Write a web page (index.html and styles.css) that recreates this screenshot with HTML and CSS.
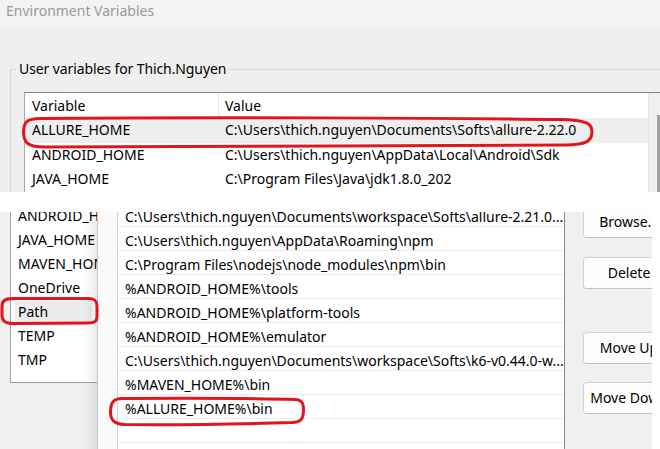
FILE: index.html
```html
<!DOCTYPE html>
<html>
<head>
<meta charset="utf-8">
<link rel="stylesheet" href="styles.css">
</head>
<body>
<div class="page">
  <section class="env">
    <header class="titlebar">Environment Variables</header>
    <div class="envbody">
      <fieldset class="group">
        <legend>User variables for Thich.Nguyen</legend>
        <div class="listbox">
          <div class="lv">
            <div class="lvrow head"><span class="c1">Variable</span><span class="c2 hsep">Value</span></div>
            <div class="lvrow sel"><span class="c1">ALLURE_HOME</span><span class="c2">C:\Users\thich.nguyen\Documents\Softs\allure-2.22.0</span></div>
            <div class="lvrow"><span class="c1">ANDROID_HOME</span><span class="c2">C:\Users\thich.nguyen\AppData\Local\Android\Sdk</span></div>
            <div class="lvrow"><span class="c1">JAVA_HOME</span><span class="c2">C:\Program Files\Java\jdk1.8.0_202</span></div>
          </div>
          <div class="vscroll"><div class="thumb"></div></div>
        </div>
      </fieldset>
    </div>
  </section>
  <div class="band"></div>
  <section class="lower">
    <div class="bleft">
      <div class="vlist">
        <div class="vitems">
          <div class="vitem">ANDROID_HOME</div>
          <div class="vitem">JAVA_HOME</div>
          <div class="vitem">MAVEN_HOME</div>
          <div class="vitem">OneDrive</div>
          <div class="vitem sel">Path</div>
          <div class="vitem">TEMP</div>
          <div class="vitem">TMP</div>
        </div>
      </div>
    </div>
    <div class="editdlg">
      <div class="elist">
        <div class="eitems">
          <div class="eitem">C:\Users\thich.nguyen\Documents\workspace\Softs\allure-2.21.0...</div>
          <div class="eitem">C:\Users\thich.nguyen\AppData\Roaming\npm</div>
          <div class="eitem">C:\Program Files\nodejs\node_modules\npm\bin</div>
          <div class="eitem">%ANDROID_HOME%\tools</div>
          <div class="eitem">%ANDROID_HOME%\platform-tools</div>
          <div class="eitem">%ANDROID_HOME%\emulator</div>
          <div class="eitem">C:\Users\thich.nguyen\Documents\workspace\Softs\k6-v0.44.0-w...</div>
          <div class="eitem">%MAVEN_HOME%\bin</div>
          <div class="eitem">%ALLURE_HOME%\bin</div>
          <div class="eitem"></div>
        </div>
      </div>
      <div class="btns">
        <div class="btn b-browse">Browse...</div>
        <div class="btn b-delete">Delete</div>
        <div class="btn b-up">Move Up</div>
        <div class="btn b-down">Move Down</div>
      </div>
    </div>
    <div class="rstrip"></div>
  </section>
  <svg class="marks" width="660" height="449" viewBox="0 0 660 449">
    <path d="M 40 118.5 C 200 117, 450 118, 560 119.5 C 588 120, 592 124, 592 132 C 592 142, 585 144.5, 565 145 C 400 146, 200 146, 45 147 C 28 147, 24 143, 23.5 133 C 23.5 122, 27 118.5, 40 118.5 Z"/>
    <path d="M 12 298.5 L 88 298.5 C 95 298.5, 97 301, 97 306 L 97 316 C 97 321, 95 323, 88 323 L 14 323.5 C 5 323.5, 2 321, 2 315 L 2 306 C 2 301, 5 298.5, 12 298.5 Z"/>
    <path d="M 122 398.5 C 200 398, 260 398.5, 295 399.5 C 302 400, 303.5 403, 303.5 410 C 303.5 419, 301 422, 292 422.5 C 240 424, 180 425, 125 424.5 C 114 424, 110.5 420, 110.5 412 C 110.5 402, 114 398.5, 122 398.5 Z"/>
  </svg>
</div>
</body>
</html>
```

FILE: styles.css
```css
* { box-sizing: border-box; }

body {
  margin: 0;
  width: 660px;
  height: 449px;
  overflow: hidden;
  background: #fff;
  font-family: "Noto Sans", "Open Sans", sans-serif;
  font-size: 14px;
  color: #000;
}

.page {
  position: relative;
  width: 660px;
  height: 449px;
  overflow: hidden;
}

/* ---------- top: Environment Variables ---------- */
.env {
  height: 192px;
  background: #efefef;
  overflow: hidden;
}

.titlebar {
  height: 28px;
  background: #f3f3f3;
  color: #9a9a9a;
  font-size: 14px;
  line-height: 21px;
  padding-left: 6px;
}

.envbody {
  padding-top: 32px;
}

.group {
  margin: 0 0 0 10px;
  border: 1px solid #d8d8d8;
  border-right: none;
  padding: 14px 0 0 13px;
  min-width: 0;
}

.group legend {
  padding: 0 3px;
  margin-left: -8px;
  line-height: 18px;
  letter-spacing: -0.1px;
  color: #000;
}

.listbox {
  display: flex;
  width: 660px;
  height: 110px;
  background: #fff;
  border-top: 1px solid #828790;
  border-left: 1px solid #a8a8a8;
}

.lv {
  width: 623px;
  flex: none;
}

.lvrow {
  display: flex;
  height: 24.5px;
  line-height: 24.5px;
  white-space: nowrap;
}

.lvrow.head {
  height: 25px;
  line-height: 25px;
}

.lvrow.sel {
  background: #efefef;
}

.c1 {
  width: 193px;
  flex: none;
  padding-left: 7px;
}

.c2 {
  padding-left: 7px;
}

.c2.hsep {
  border-left: 1px solid #e5e5e5;
  padding-left: 6px;
}

.vscroll {
  flex: none;
  width: 20px;
  border-left: 1px solid #e3e3e3;
  background: #f0f0f0;
  padding: 22px 0 0 8px;
}

.thumb {
  width: 10px;
  height: 80px;
  background: #a3a3a3;
}

/* ---------- gap ---------- */
.band {
  height: 20px;
  background: #fff;
}

/* ---------- lower: edit environment variable ---------- */
.lower {
  display: flex;
  height: 237px;
}

.bleft {
  position: relative;
  width: 97px;
  flex: none;
  background: #f0f0f0;
  padding-left: 10px;
}

.bleft::after {
  content: "";
  position: absolute;
  top: 0;
  right: 0;
  bottom: 0;
  width: 13px;
  background: linear-gradient(to right, rgba(0, 0, 0, 0), rgba(0, 0, 0, 0.08));
}

.vlist {
  height: 171px;
  background: #fff;
  border-left: 1px solid #a0a0a0;
  border-bottom: 1px solid #a0a0a0;
  overflow: hidden;
}

.vitems {
  margin-top: -8px;
}

.vitem {
  height: 24px;
  line-height: 24px;
  padding-left: 7px;
  white-space: nowrap;
}

.vitem.sel {
  height: 22px;
  line-height: 22px;
  margin: 1px 5px 1px 4px;
  padding-left: 3px;
  background: #ececec;
}

.editdlg {
  flex: none;
  width: 555px;
  display: flex;
  overflow: hidden;
  border-left: 1px solid #c6c6c6;
  padding-left: 19px;
  background: linear-gradient(to right, #fafafa 19px, #f0f0f0 19px);
}

.elist {
  flex: none;
  width: 448px;
  background: #fff;
  border-left: 1px solid #d2d2d2;
  border-right: 1px solid #8a8a8a;
  overflow: hidden;
}

.eitems {
  margin-top: -9px;
}

.eitem {
  height: 24px;
  line-height: 23px;
  padding: 2px 0 0 7px;
  border-bottom: 1px solid #ebebeb;
  white-space: nowrap;
}

.btns {
  flex: none;
  width: 92px;
  margin: -6px 0 0 18px;
  display: flex;
  flex-direction: column;
}

.btn {
  height: 32px;
  flex: none;
  border: 1px solid #d2d2d2;
  border-bottom-color: #c2c2c2;
  border-radius: 4px;
  background: #fdfdfd;
  text-align: center;
  line-height: 30px;
  white-space: nowrap;
}

.b-delete { margin-top: 19px; }
.b-up { margin-top: 43px; }
.b-down { margin-top: 18px; }

.rstrip {
  flex: none;
  width: 8px;
  background: #fff;
}

/* ---------- red annotations ---------- */
.marks {
  position: absolute;
  left: 0;
  top: 0;
  pointer-events: none;
}

.marks path {
  fill: none;
  stroke: #e3151c;
  stroke-width: 3;
  stroke-linejoin: round;
}
```
